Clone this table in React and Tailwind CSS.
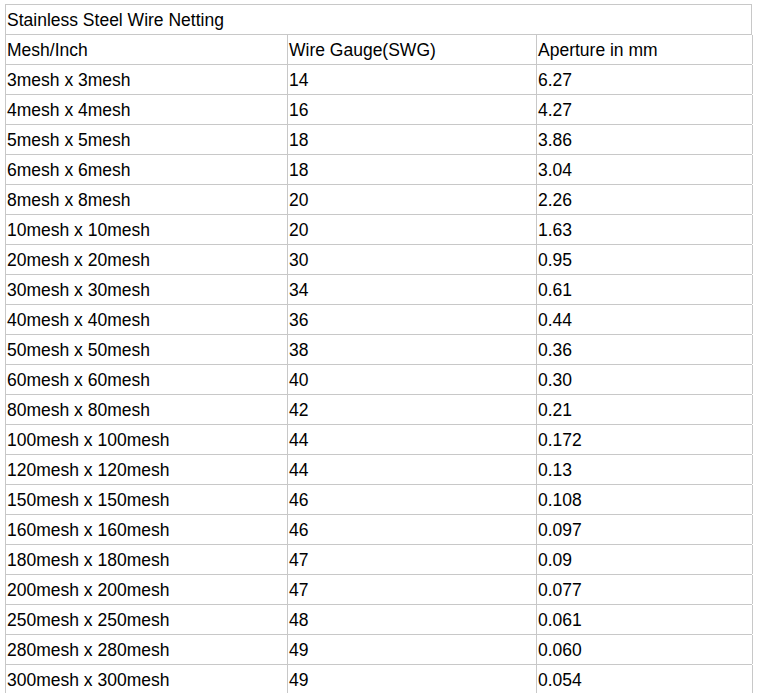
const rows = [
  ['3mesh x 3mesh', '14', '6.27'],
  ['4mesh x 4mesh', '16', '4.27'],
  ['5mesh x 5mesh', '18', '3.86'],
  ['6mesh x 6mesh', '18', '3.04'],
  ['8mesh x 8mesh', '20', '2.26'],
  ['10mesh x 10mesh', '20', '1.63'],
  ['20mesh x 20mesh', '30', '0.95'],
  ['30mesh x 30mesh', '34', '0.61'],
  ['40mesh x 40mesh', '36', '0.44'],
  ['50mesh x 50mesh', '38', '0.36'],
  ['60mesh x 60mesh', '40', '0.30'],
  ['80mesh x 80mesh', '42', '0.21'],
  ['100mesh x 100mesh', '44', '0.172'],
  ['120mesh x 120mesh', '44', '0.13'],
  ['150mesh x 150mesh', '46', '0.108'],
  ['160mesh x 160mesh', '46', '0.097'],
  ['180mesh x 180mesh', '47', '0.09'],
  ['200mesh x 200mesh', '47', '0.077'],
  ['250mesh x 250mesh', '48', '0.061'],
  ['280mesh x 280mesh', '49', '0.060'],
  ['300mesh x 300mesh', '49', '0.054'],
];

const row = 'grid grid-cols-[282px_249px_216px] h-[30px] border-b border-[#c8c8c8]';
const cell = 'border-r border-[#c8c8c8] px-[1px] pt-[7px] whitespace-nowrap';

export default function App() {
  return (
    <div className="bg-white w-[759px] h-[693px] overflow-hidden pt-[4px] pl-[5px] text-black font-['Liberation_Sans',Arial,sans-serif] text-[17.5px] leading-none">
      <div className="w-[747px] border-t border-l border-[#c8c8c8]">
        {/* title row spans the three columns */}
        <div className="h-[30px] border-b border-r border-[#c8c8c8] px-[1px] pt-[7px]">
          Stainless Steel Wire Netting
        </div>
        <div className={row}>
          <div className={cell}>Mesh/Inch</div>
          <div className={cell}>Wire Gauge(SWG)</div>
          <div className={cell}>Aperture in mm</div>
        </div>
        {rows.map((r) => (
          <div key={r[0]} className={row}>
            <div className={cell}>{r[0]}</div>
            <div className={cell}>{r[1]}</div>
            <div className={cell}>{r[2]}</div>
          </div>
        ))}
      </div>
    </div>
  );
}
